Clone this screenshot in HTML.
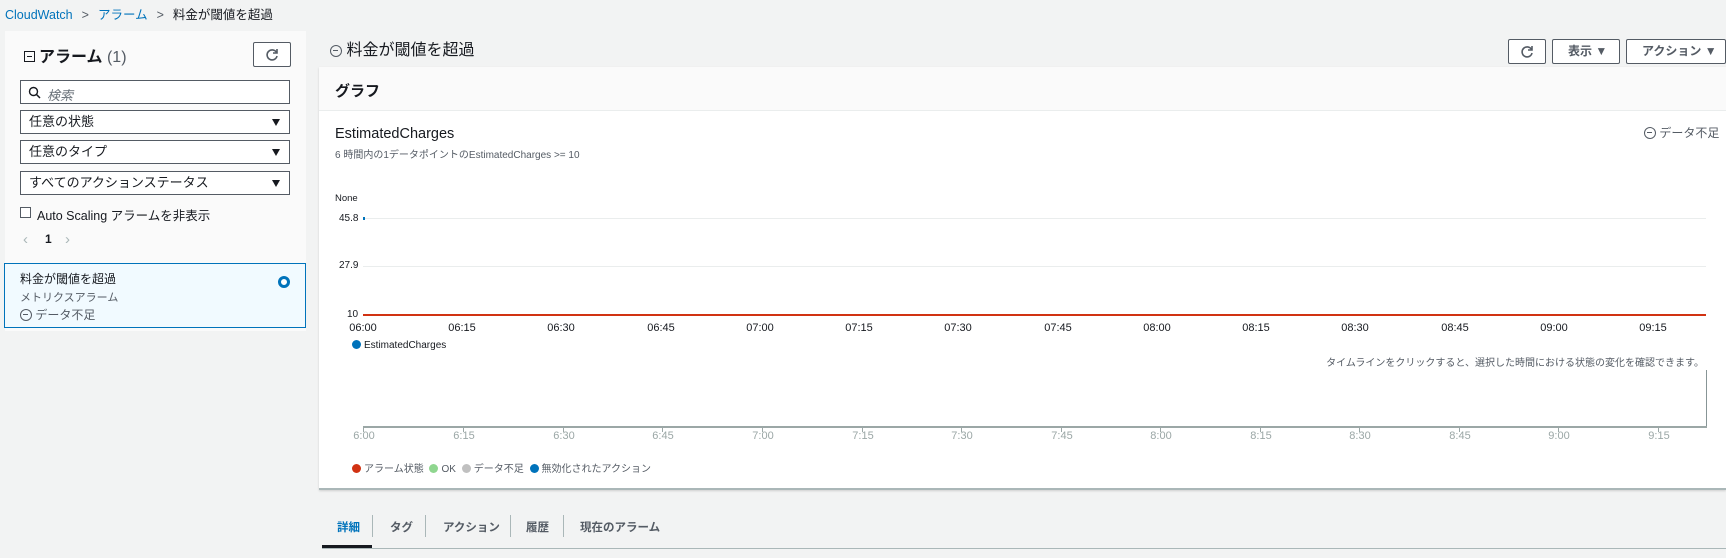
<!DOCTYPE html>
<html><head><meta charset="utf-8"><style>
*{box-sizing:border-box;margin:0;padding:0}
body{width:1726px;height:558px;background:#f2f3f3;font-family:"Liberation Sans","Noto Sans CJK JP",sans-serif;color:#16191f;position:relative;overflow:hidden;font-size:13px}
.a{position:absolute;white-space:nowrap}
.box{position:absolute;background:#fff;border:1px solid #545b64;height:24px}
.dd{font-size:13px;padding:3px 8px;line-height:16px}
.dd:after{content:"";position:absolute;right:9px;top:8px;border-left:4.5px solid transparent;border-right:4.5px solid transparent;border-top:7px solid #16191f}
.btn{position:absolute;background:#fff;border:1px solid #545b64;border-radius:2px;height:25px;font-size:12px;font-weight:bold;line-height:23px;color:#545b64}
.xl{position:absolute;font-size:11px;top:322px;transform:translateX(-50%)}
.tl{position:absolute;font-size:11px;color:#9ba7a6;top:430px;transform:translateX(-50%)}
.tk{position:absolute;top:427px;width:1px;height:5px;background:#9ba7a6}
.gl{position:absolute;left:363px;width:1343px;height:1px;background:#eaeded}
.dot{display:inline-block;width:9px;height:9px;border-radius:50%;vertical-align:-1px;margin-right:3px}
.mi{display:inline-block;width:12px;height:12px;border:1.3px solid #545b64;border-radius:50%;position:relative;vertical-align:-2px}
.mi:after{content:"";position:absolute;left:2px;top:4px;width:5px;height:1.3px;background:#545b64}
.rf{position:absolute;left:50%;top:50%;transform:translate(-50%,-50%)}
</style></head><body>
<div class="a" style="left:5px;top:4px;font-size:12.5px"><span style="color:#0073bb">CloudWatch</span><span style="color:#545b64;margin:0 9px">&gt;</span><span style="color:#0073bb">アラーム</span><span style="color:#545b64;margin:0 9px">&gt;</span><span style="color:#16191f">料金が閾値を超過</span></div>

<div class="a" style="left:5px;top:31px;width:301px;height:300px;background:#fafafa"></div>
<div class="a" style="left:24px;top:43px;font-size:16px;font-weight:bold"><span style="display:inline-block;width:11px;height:11px;border:1.3px solid #16191f;position:relative;vertical-align:0px;margin-right:4px"><span style="position:absolute;left:2px;top:4px;width:5px;height:1.3px;background:#16191f"></span></span>アラーム <span style="font-weight:normal;color:#545b64">(1)</span></div>
<div class="btn" style="left:253px;top:42px;width:38px;height:25px"><svg class="rf" width="14" height="14" viewBox="0 0 14 14"><path d="M11.5 4.5A5 5 0 1 0 12 8" fill="none" stroke="#545b64" stroke-width="1.6"/><path d="M12 1v4H8" fill="none" stroke="#545b64" stroke-width="1.6"/></svg></div>
<div class="box" style="left:20px;top:80px;width:270px;height:24px"><svg class="a" style="left:7px;top:5px" width="13" height="13" viewBox="0 0 13 13"><circle cx="5.5" cy="5.5" r="4" fill="none" stroke="#16191f" stroke-width="1.4"/><path d="M8.5 8.5L12 12" stroke="#16191f" stroke-width="1.5"/></svg><span class="a" style="left:26px;top:4px;color:#687078;font-style:italic">検索</span></div>
<div class="box dd" style="left:20px;top:110px;width:270px">任意の状態</div>
<div class="box dd" style="left:20px;top:140px;width:270px">任意のタイプ</div>
<div class="box dd" style="left:20px;top:171px;width:270px">すべてのアクションステータス</div>
<div class="a" style="left:20px;top:207px;width:11px;height:11px;border:1px solid #545b64;background:#fff"></div>
<div class="a" style="left:37px;top:205px;font-size:12.5px">Auto Scaling アラームを非表示</div>
<div class="a" style="left:23px;top:231px;color:#aab7b8;font-size:15px">‹</div>
<div class="a" style="left:45px;top:232px;font-weight:bold;font-size:12px">1</div>
<div class="a" style="left:65px;top:231px;color:#aab7b8;font-size:15px">›</div>
<div class="a" style="left:4px;top:263px;width:302px;height:65px;background:#f1faff;border:1px solid #0073bb"></div>
<div class="a" style="left:20px;top:270px;font-size:12px">料金が閾値を超過</div>
<div class="a" style="left:20px;top:289px;font-size:11px;color:#545b64">メトリクスアラーム</div>
<div class="a" style="left:20px;top:306px;font-size:12px;color:#545b64"><span class="mi"></span> データ不足</div>
<div class="a" style="left:278px;top:276px;width:12px;height:12px;border-radius:50%;border:3.5px solid #0073bb;background:#fff"></div>

<div class="a" style="left:330px;top:36px;font-size:16px;color:#16191f"><span class="mi"></span> 料金が閾値を超過</div>
<div class="btn" style="left:1508px;top:39px;width:38px"><svg class="rf" width="14" height="14" viewBox="0 0 14 14"><path d="M11.5 4.5A5 5 0 1 0 12 8" fill="none" stroke="#545b64" stroke-width="1.6"/><path d="M12 1v4H8" fill="none" stroke="#545b64" stroke-width="1.6"/></svg></div>
<div class="btn" style="left:1552px;top:39px;width:68px;padding-left:15px">表示 ▼</div>
<div class="btn" style="left:1626px;top:39px;width:100px;padding-left:15px">アクション ▼</div>

<div class="a" style="left:319px;top:67px;width:1407px;height:423px;background:#fff;border-bottom:2px solid #aab7b8;box-shadow:0 1px 2px rgba(0,0,0,.15)"></div>
<div class="a" style="left:319px;top:67px;width:1407px;height:44px;background:#fafafa;border-bottom:1px solid #eaeded"></div>
<div class="a" style="left:335px;top:80px;font-size:15px;font-weight:bold">グラフ</div>
<div class="a" style="left:335px;top:126px;font-size:14.5px">EstimatedCharges</div>
<div class="a" style="left:335px;top:146px;font-size:10px;color:#545b64">6 時間内の1データポイントのEstimatedCharges &gt;= 10</div>
<div class="a" style="left:1644px;top:124px;font-size:12px;color:#545b64"><span class="mi"></span> データ不足</div>
<div class="a" style="left:335px;top:193px;font-size:9.5px">None</div>
<div class="a" style="left:339px;top:213px;font-size:10px">45.8</div>
<div class="a" style="left:339px;top:260px;font-size:10px">27.9</div>
<div class="a" style="left:347px;top:309px;font-size:10px">10</div>
<div class="gl" style="top:218px"></div>
<div class="gl" style="top:266px"></div>
<div class="a" style="left:363px;top:217px;width:2px;height:3px;background:#0073bb"></div>
<div class="a" style="left:363px;top:314px;width:1343px;height:2px;background:#d13212"></div>
<div class="xl" style="left:363px">06:00</div><div class="xl" style="left:462px">06:15</div><div class="xl" style="left:561px">06:30</div><div class="xl" style="left:661px">06:45</div><div class="xl" style="left:760px">07:00</div><div class="xl" style="left:859px">07:15</div><div class="xl" style="left:958px">07:30</div><div class="xl" style="left:1058px">07:45</div><div class="xl" style="left:1157px">08:00</div><div class="xl" style="left:1256px">08:15</div><div class="xl" style="left:1355px">08:30</div><div class="xl" style="left:1455px">08:45</div><div class="xl" style="left:1554px">09:00</div><div class="xl" style="left:1653px">09:15</div>
<div class="a" style="left:352px;top:340px;font-size:10px"><span class="dot" style="background:#0073bb"></span>EstimatedCharges</div>
<div class="a" style="right:22px;top:354px;font-size:10px;color:#545b64">タイムラインをクリックすると、選択した時間における状態の変化を確認できます。</div>
<div class="a" style="left:1706px;top:370px;width:1px;height:57px;background:#879596"></div>
<div class="a" style="left:363px;top:426px;width:1344px;height:2px;background:#9ba7a6"></div>
<div class="tk" style="left:363px"></div><div class="tk" style="left:463px"></div><div class="tk" style="left:563px"></div><div class="tk" style="left:662px"></div><div class="tk" style="left:762px"></div><div class="tk" style="left:862px"></div><div class="tk" style="left:961px"></div><div class="tk" style="left:1061px"></div><div class="tk" style="left:1160px"></div><div class="tk" style="left:1260px"></div><div class="tk" style="left:1359px"></div><div class="tk" style="left:1459px"></div><div class="tk" style="left:1558px"></div><div class="tk" style="left:1658px"></div>
<div class="tl" style="left:364px">6:00</div><div class="tl" style="left:464px">6:15</div><div class="tl" style="left:564px">6:30</div><div class="tl" style="left:663px">6:45</div><div class="tl" style="left:763px">7:00</div><div class="tl" style="left:863px">7:15</div><div class="tl" style="left:962px">7:30</div><div class="tl" style="left:1062px">7:45</div><div class="tl" style="left:1161px">8:00</div><div class="tl" style="left:1261px">8:15</div><div class="tl" style="left:1360px">8:30</div><div class="tl" style="left:1460px">8:45</div><div class="tl" style="left:1559px">9:00</div><div class="tl" style="left:1659px">9:15</div>
<div class="a" style="left:352px;top:460px;font-size:10px;color:#545b64"><span class="dot" style="background:#d13212"></span>アラーム状態 <span class="dot" style="background:#8fd68f;margin-left:3px"></span>OK <span class="dot" style="background:#c0c0c0;margin-left:3px"></span>データ不足 <span class="dot" style="background:#0073bb;margin-left:3px"></span>無効化されたアクション</div>

<div class="a" style="left:322px;top:548px;width:1404px;height:1px;background:#aab7b8"></div>
<div class="a" style="left:322px;top:545px;width:50px;height:3px;background:#16191f"></div>
<div class="a" style="left:337px;top:519px;font-size:11.5px;font-weight:bold;color:#0073bb">詳細</div>
<div class="a" style="left:390px;top:519px;font-size:11.5px;font-weight:bold;color:#545b64">タグ</div>
<div class="a" style="left:443px;top:519px;font-size:11.5px;font-weight:bold;color:#545b64">アクション</div>
<div class="a" style="left:526px;top:519px;font-size:11.5px;font-weight:bold;color:#545b64">履歴</div>
<div class="a" style="left:580px;top:519px;font-size:11.5px;font-weight:bold;color:#545b64">現在のアラーム</div>
<div class="a" style="left:372px;top:515px;width:1px;height:22px;background:#aab7b8"></div>
<div class="a" style="left:425px;top:515px;width:1px;height:22px;background:#aab7b8"></div>
<div class="a" style="left:510px;top:515px;width:1px;height:22px;background:#aab7b8"></div>
<div class="a" style="left:563px;top:515px;width:1px;height:22px;background:#aab7b8"></div>
</body></html>
